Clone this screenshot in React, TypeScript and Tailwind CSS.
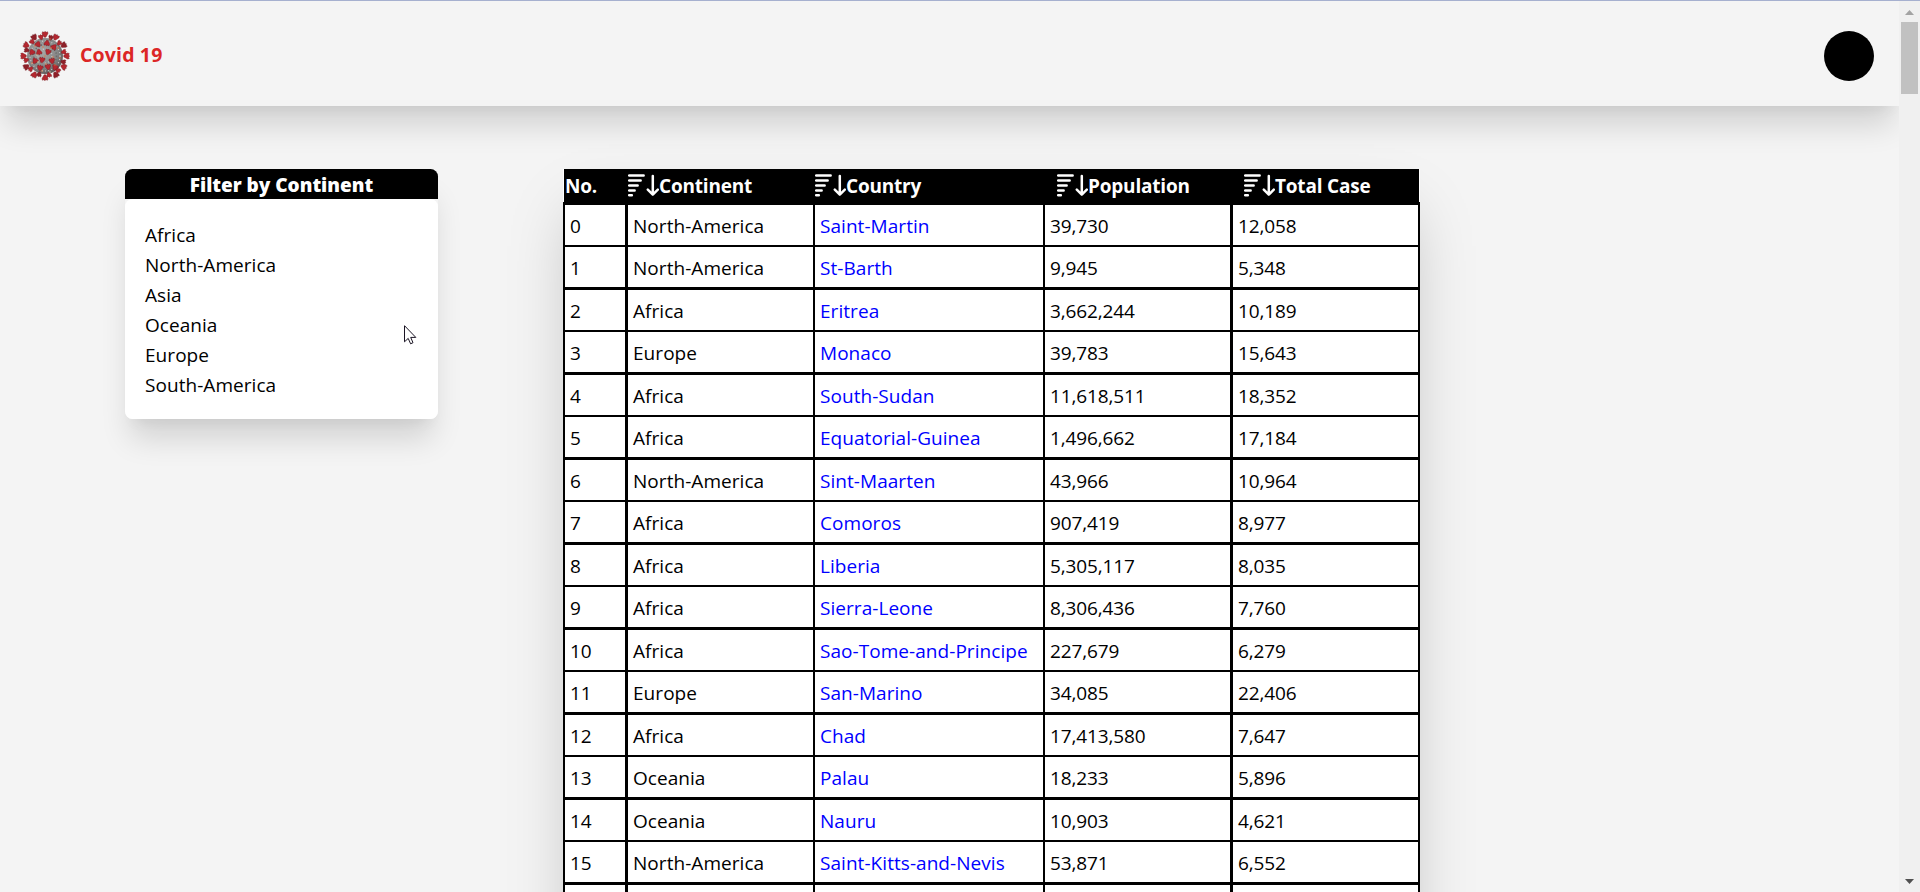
import React from "react";

const SEGOE = "font-['Segoe_UI','Open_Sans',sans-serif]";

const continents = ["Africa", "North-America", "Asia", "Oceania", "Europe", "South-America"];

const rows: [string, string, string, string][] = [
  ["North-America", "Saint-Martin", "39,730", "12,058"],
  ["North-America", "St-Barth", "9,945", "5,348"],
  ["Africa", "Eritrea", "3,662,244", "10,189"],
  ["Europe", "Monaco", "39,783", "15,643"],
  ["Africa", "South-Sudan", "11,618,511", "18,352"],
  ["Africa", "Equatorial-Guinea", "1,496,662", "17,184"],
  ["North-America", "Sint-Maarten", "43,966", "10,964"],
  ["Africa", "Comoros", "907,419", "8,977"],
  ["Africa", "Liberia", "5,305,117", "8,035"],
  ["Africa", "Sierra-Leone", "8,306,436", "7,760"],
  ["Africa", "Sao-Tome-and-Principe", "227,679", "6,279"],
  ["Europe", "San-Marino", "34,085", "22,406"],
  ["Africa", "Chad", "17,413,580", "7,647"],
  ["Oceania", "Palau", "18,233", "5,896"],
  ["Oceania", "Nauru", "10,903", "4,621"],
  ["North-America", "Saint-Kitts-and-Nevis", "53,871", "6,552"],
];

function SortIcon() {
  return (
    <svg width="31" height="25" viewBox="0 0 31 25" fill="none" stroke="#fff" strokeLinecap="round" className="shrink-0">
      <path d="M1.2 2.5H15.6M1.2 7.5H12.6M1.2 12.5H9.6M1.2 17.5H6.6M1.2 22.2H3.8" strokeWidth="2.6" />
      <path d="M24.8 3V21.5M19.8 16.6L24.8 21.6L29.8 16.6" strokeWidth="2.5" strokeLinejoin="round" />
    </svg>
  );
}

function Spike({ x, y, a, s = 1, dark = false }: { x: number; y: number; a: number; s?: number; dark?: boolean }) {
  return (
    <path
      d="M-.7 2.6L-2.7-.8L-2.3-2.4L-.8-1.9L0-2.8L1-1.9L2.4-2.4L2.7-.8L.8 2.6Z"
      fill={dark ? "#8e2028" : "#b5272f"}
      stroke="#6d1a20"
      strokeWidth=".35"
      transform={`translate(${x} ${y}) rotate(${a}) scale(${s})`}
    />
  );
}

function Virus() {
  const ring = Array.from({ length: 24 }, (_, i) => {
    const a = i * 15 + (i % 2 ? 3 : 0);
    const r = i % 2 ? 19.2 : 21.6;
    const t = (a * Math.PI) / 180;
    return { a, x: 25 + r * Math.sin(t), y: 25 - r * Math.cos(t) };
  });
  const inner: [number, number, number][] = [
    [18, 13, 200], [27, 12, 190], [34, 16, 220], [12, 21, 160], [19, 21, 170], [28, 21, 20],
    [15, 30, 30], [22, 29, 10], [32, 30, 350], [20, 37, 10], [28, 36, 350], [35, 36, 140],
  ];
  const dots: [number, number][] = [
    [15, 15], [23, 16], [31, 17], [17, 24], [25, 25], [33, 26], [12, 32], [18, 31], [26, 33], [35, 34], [22, 40], [30, 41], [38, 17], [30, 8], [40, 27],
  ];
  return (
    <svg width="50" height="50" viewBox="0 0 50 50">
      <defs>
        <radialGradient id="virusBody" cx=".4" cy=".38" r=".65">
          <stop offset="0" stopColor="#a9a9a9" />
          <stop offset=".7" stopColor="#858585" />
          <stop offset="1" stopColor="#5c5656" />
        </radialGradient>
      </defs>
      <circle cx="25" cy="25" r="18" fill="url(#virusBody)" />
      <circle cx="25" cy="25" r="15" fill="none" stroke="#c6c6c6" strokeWidth="1.2" strokeDasharray="1 2.2" />
      <circle cx="25" cy="25" r="11.5" fill="none" stroke="#6c6c6c" strokeWidth="1.6" strokeDasharray="1.2 1.9" />
      <circle cx="25" cy="25" r="7" fill="none" stroke="#cbcbcb" strokeWidth="1.2" strokeDasharray="1 2.4" />
      {ring.map((p, i) => (
        <Spike key={i} x={p.x} y={p.y} a={p.a} dark={i % 3 === 1} s={i % 2 ? 0.95 : 1.1} />
      ))}
      {inner.map(([x, y, a], i) => (
        <Spike key={i} x={x} y={y} a={a} s={1.05} />
      ))}
      {dots.map(([x, y], i) => (
        <circle key={i} cx={x} cy={y} r=".7" fill={i % 4 === 3 ? "#e8dca0" : "#e8743c"} />
      ))}
    </svg>
  );
}

function Scrollbar() {
  return (
    <div className="flex w-[21px] shrink-0 flex-col items-center justify-between bg-[#f0f0f0]">
      <div className="flex flex-col items-center">
        <svg width="9" height="5" viewBox="0 0 9 5" className="mt-[9px]"><path d="M0 5L4.5 0L9 5Z" fill="#a3a3a3" /></svg>
        <div className="mt-[7px] h-[72px] w-[17px] bg-[#c1c1c1]" />
      </div>
      <svg width="9" height="5" viewBox="0 0 9 5" className="mb-[8px]"><path d="M0 0L4.5 5L9 0Z" fill="#505050" /></svg>
    </div>
  );
}

function Cursor() {
  return (
    <svg width="13" height="20" viewBox="0 0 13 20" className="absolute left-[279px] top-[156px]">
      <path d="M.5 .7V16.8L4.2 13.4L6.6 18.8L9 17.7L6.7 12.4H11.8Z" fill="#fff" stroke="#1a1423" />
    </svg>
  );
}

const word = "text-[19px] tracking-[0.05px]";
const digits = "text-[19px] tracking-[-0.13px]";
const bold = "text-[19px] font-bold tracking-[-0.2px]";
const shadowXl = "shadow-[0_25px_31px_-6px_rgba(0,0,0,0.14),0_10px_12.5px_-7.5px_rgba(0,0,0,0.05)]";

export default function App() {
  return (
    <div className={`flex h-[892px] flex-col overflow-hidden border-t border-[#a6b0cf] bg-[#f4f4f4] text-black ${SEGOE}`}>
      <div className="flex min-h-0 flex-1">
        <div className="flex min-w-0 flex-1 flex-col overflow-hidden">
          <header className={`flex h-[105px] shrink-0 items-center justify-between pl-5 pr-[25px] pt-[5px] ${shadowXl}`}>
            <div className="flex items-center gap-2.5">
              <Virus />
              <span className="pb-[3px] text-[19.5px] font-bold leading-[30px] tracking-[0.15px] text-[#dc2626]">Covid 19</span>
            </div>
            <div className="size-[50px] rounded-full bg-black" />
          </header>
          <main className="flex items-start gap-[125px] pl-[125px] pt-[63px]">
            <aside className={`relative h-[250px] w-[313px] rounded-[7.5px] ${shadowXl}`}>
              <h2 className="h-[30px] rounded-t-[7.5px] bg-black text-center text-[19px] font-extrabold leading-[32px] tracking-[-0.02px] text-white">
                Filter by Continent
              </h2>
              <ul className="rounded-[7.5px] bg-white p-5">
                {continents.map((c) => (
                  <li key={c} className={`h-[30px] leading-[32px] ${word}`}>{c}</li>
                ))}
              </ul>
              <Cursor />
            </aside>
            <section className="w-[857px] bg-white shadow-[0_31px_62px_-15px_rgba(0,0,0,0.25)]">
              <div className={`mx-px flex h-[33px] items-center bg-black leading-[33px] text-white ${bold}`}>
                <div className="w-[64px] pl-px pt-[2px]">No.</div>
                <div className="flex w-[187px] items-center"><SortIcon /><span className="pt-[2px]">Continent</span></div>
                <div className="flex w-[242px] items-center"><SortIcon /><span className="pt-[2px]">Country</span></div>
                <div className="flex w-[187px] items-center"><SortIcon /><span className="pt-[2px]">Population</span></div>
                <div className="flex items-center"><SortIcon /><span className="pt-[2px]">Total Case</span></div>
              </div>
              <div className="border-l-2 border-t-[3px] border-black">
                {rows.map(([continent, country, population, cases], i) => (
                  <div key={country} className={`flex border-black ${i % 2 ? "h-[43px] border-b-[3px]" : "h-[42px] border-b-2"}`}>
                    <div className={`w-[63px] border-r-[3px] border-black pl-[5px] leading-[42px] ${digits}`}>{i}</div>
                    <div className={`w-[187px] border-r-2 border-black pl-[5px] leading-[42px] ${word}`}>{continent}</div>
                    <div className={`w-[230px] border-r-2 border-black pl-[5px] leading-[42px] text-[#0000ff] ${word}`}>{country}</div>
                    <div className={`w-[188px] border-r-[3px] border-black pl-[5px] leading-[42px] ${digits}`}>{population}</div>
                    <div className={`w-[187px] border-r-2 border-black pl-[5px] leading-[42px] ${digits}`}>{cases}</div>
                  </div>
                ))}
                <div className="flex h-[60px]">
                  <div className="w-[63px] border-r-[3px] border-black" />
                  <div className="w-[187px] border-r-2 border-black" />
                  <div className="w-[230px] border-r-2 border-black" />
                  <div className="w-[188px] border-r-[3px] border-black" />
                  <div className="w-[187px] border-r-2 border-black" />
                </div>
              </div>
            </section>
          </main>
        </div>
        <Scrollbar />
      </div>
    </div>
  );
}
